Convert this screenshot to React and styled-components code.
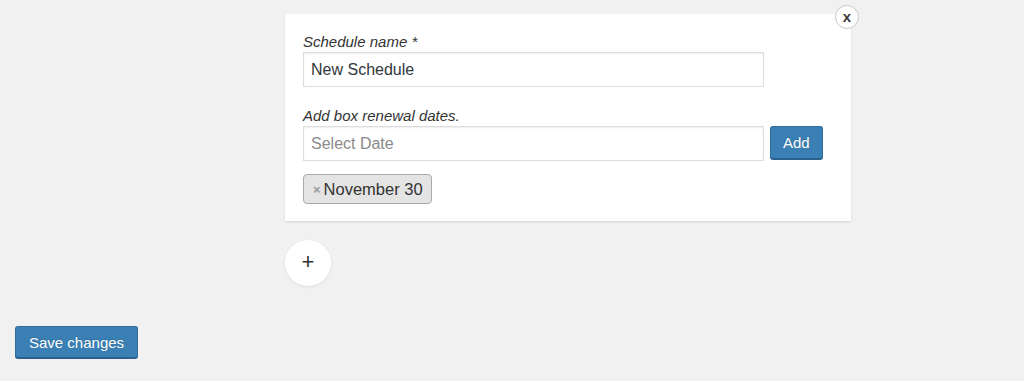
import styled, { createGlobalStyle } from "styled-components";

const GlobalStyle = createGlobalStyle`
  html, body {
    margin: 0;
    background: #f1f1f1;
    font-family: "Liberation Sans", Arial, sans-serif;
    color: #32373c;
  }
`;

const Page = styled.div`
  padding: 14px 15px 20px;
`;

const Schedules = styled.div`
  margin-left: 270px;
  width: 566px;
`;

const Card = styled.div`
  position: relative;
  background: #fff;
  padding: 18px 18px 17px;
  box-shadow: 0 1px 2px rgba(0, 0, 0, 0.12);
`;

const CloseButton = styled.button`
  position: absolute;
  top: -9px;
  right: -8px;
  width: 24px;
  height: 24px;
  border-radius: 50%;
  border: 1px solid #c8c8c8;
  background: #fff;
  padding: 0 0 2px;
  font: bold 15px "Liberation Sans", Arial, sans-serif;
  color: #3a3a3a;
  line-height: 1;
`;

const Label = styled.label`
  display: block;
  font-size: 15px;
  font-style: italic;
  line-height: 20px;
  color: #333;
  margin-top: ${(p) => (p.$first ? "0" : "19px")};
`;

const Row = styled.div`
  display: flex;
  align-items: flex-start;
  gap: 6px;
`;

const TextInput = styled.input`
  box-sizing: border-box;
  width: 461px;
  height: 35px;
  padding: 0 7px;
  border: 1px solid #ddd;
  box-shadow: inset 0 1px 2px rgba(0, 0, 0, 0.07);
  font: 16px "Liberation Sans", Arial, sans-serif;
  color: #32373c;
  outline: none;
  &::placeholder {
    color: #8a8a8a;
  }
`;

const PrimaryButton = styled.button`
  box-sizing: border-box;
  height: ${(p) => p.$height || "33px"};
  padding: 0 ${(p) => p.$pad || "12px"};
  background: #3a80b5;
  border: 1px solid #2f6d9c;
  border-bottom-color: #2a628d;
  border-radius: 3px;
  box-shadow: 0 1px 0 #2a628d;
  color: #fff;
  font: 15px "Liberation Sans", Arial, sans-serif;
  text-shadow: 0 -1px 1px rgba(0, 0, 0, 0.15);
`;

const Tags = styled.div`
  display: flex;
  gap: 6px;
  margin-top: 13px;
`;

const Tag = styled.span`
  box-sizing: border-box;
  display: inline-flex;
  align-items: center;
  height: 30px;
  padding: 0 8px 0 9px;
  background: #e4e4e4;
  border: 1px solid #aaa;
  border-radius: 4px;
  font-size: 16.5px;
  color: #333;
`;

const TagRemove = styled.span`
  color: #999;
  font-weight: bold;
  font-size: 13px;
  margin-right: 3px;
`;

const AddSchedule = styled.button`
  margin-top: 19px;
  width: 46px;
  height: 46px;
  border-radius: 50%;
  border: none;
  background: #fff;
  box-shadow: 0 1px 3px rgba(0, 0, 0, 0.08);
  font: 22px "Liberation Sans", Arial, sans-serif;
  color: #333;
  padding: 0 0 2px;
  line-height: 1;
`;

const Footer = styled.div`
  margin-top: 40px;
`;

export default function App() {
  return (
    <Page>
      <GlobalStyle />
      <Schedules>
        <Card>
          <CloseButton>x</CloseButton>
          <Label $first>Schedule name *</Label>
          <TextInput defaultValue="New Schedule" />
          <Label>Add box renewal dates.</Label>
          <Row>
            <TextInput placeholder="Select Date" />
            <PrimaryButton>Add</PrimaryButton>
          </Row>
          <Tags>
            <Tag>
              <TagRemove>×</TagRemove>November 30
            </Tag>
          </Tags>
        </Card>
        <AddSchedule>+</AddSchedule>
      </Schedules>
      <Footer>
        <PrimaryButton $height="32px" $pad="13px">Save changes</PrimaryButton>
      </Footer>
    </Page>
  );
}
